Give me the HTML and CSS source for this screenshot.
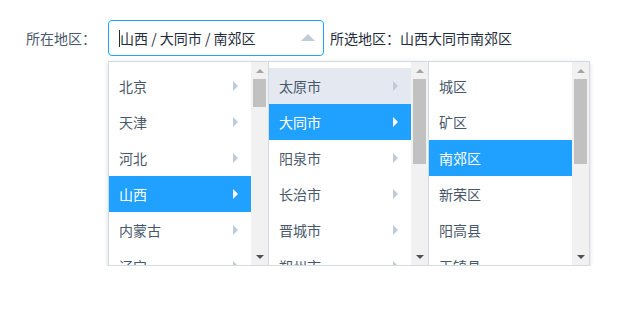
FILE: index.html
```html
<!DOCTYPE html>
<html lang="zh-CN">
<head>
<meta charset="utf-8">
<title>级联选择</title>
<link rel="stylesheet" href="styles.css">
</head>
<body>
<div class="page">
  <div class="form-row">
    <label class="form-label">所在地区：</label>
    <div class="cascader-input">
      <span class="caret-line"></span>
      <span class="cascader-value">山西 / 大同市 / 南郊区</span>
      <span class="cascader-arrow"></span>
    </div>
    <span class="selected-text">所选地区：山西大同市南郊区</span>
  </div>
  <div class="cascader-menus">
    <div class="menu">
      <ul class="menu-list">
        <li class="item">北京<i class="caret"></i></li>
        <li class="item">天津<i class="caret"></i></li>
        <li class="item">河北<i class="caret"></i></li>
        <li class="item active">山西<i class="caret"></i></li>
        <li class="item">内蒙古<i class="caret"></i></li>
        <li class="item">辽宁<i class="caret"></i></li>
      </ul>
      <div class="scrollbar">
        <div class="sb-btn"><span class="sb-up"></span></div>
        <div class="sb-track"><div class="sb-thumb thumb-short"></div></div>
        <div class="sb-btn"><span class="sb-down"></span></div>
      </div>
    </div>
    <div class="menu">
      <ul class="menu-list">
        <li class="item hover">太原市<i class="caret"></i></li>
        <li class="item active">大同市<i class="caret"></i></li>
        <li class="item">阳泉市<i class="caret"></i></li>
        <li class="item">长治市<i class="caret"></i></li>
        <li class="item">晋城市<i class="caret"></i></li>
        <li class="item">朔州市<i class="caret"></i></li>
      </ul>
      <div class="scrollbar">
        <div class="sb-btn"><span class="sb-up"></span></div>
        <div class="sb-track"><div class="sb-thumb thumb-long"></div></div>
        <div class="sb-btn"><span class="sb-down"></span></div>
      </div>
    </div>
    <div class="menu menu-last">
      <ul class="menu-list">
        <li class="item">城区</li>
        <li class="item">矿区</li>
        <li class="item active">南郊区</li>
        <li class="item">新荣区</li>
        <li class="item">阳高县</li>
        <li class="item">天镇县</li>
      </ul>
      <div class="scrollbar">
        <div class="sb-btn"><span class="sb-up"></span></div>
        <div class="sb-track"><div class="sb-thumb thumb-long"></div></div>
        <div class="sb-btn"><span class="sb-down"></span></div>
      </div>
    </div>
  </div>
</div>
</body>
</html>
```
FILE: styles.css
```css
* { box-sizing: border-box; }
html, body { margin: 0; padding: 0; background: #fff; }
body {
  font-family: "Noto Sans CJK SC", "Microsoft YaHei", "Noto Sans", sans-serif;
  font-size: 14px;
  color: #48576a;
}
.page {
  padding: 20px 0 0 8px;
}
.form-row {
  display: flex;
  align-items: center;
}
.form-label {
  width: 100px;
  text-align: right;
  padding-right: 12px;
  color: #48576a;
  line-height: 36px;
}
.cascader-input {
  width: 216px;
  height: 36px;
  border: 1px solid #20a0ff;
  border-radius: 4px;
  display: flex;
  align-items: center;
  padding-left: 10px;
  position: relative;
}
.caret-line {
  width: 1px;
  height: 17px;
  background: #1f2d3d;
}
.cascader-value {
  color: #1f2d3d;
  line-height: 36px;
}
.cascader-arrow {
  position: absolute;
  right: 8px;
  top: 13px;
  width: 0;
  height: 0;
  border-left: 7px solid transparent;
  border-right: 7px solid transparent;
  border-bottom: 7px solid #bfcbd9;
}
.selected-text {
  margin-left: 6px;
  color: #1f2d3d;
  line-height: 36px;
}
.cascader-menus {
  margin: 5px 0 0 100px;
  display: flex;
  width: 482px;
  height: 205px;
  background: #fff;
  border: 1px solid #d1dbe5;
  box-shadow: 0 2px 4px rgba(0,0,0,.12), 0 0 6px rgba(0,0,0,.04);
}
.menu {
  width: 160px;
  flex: none;
  display: flex;
  border-right: 1px solid #d1dbe5;
  overflow: hidden;
}
.menu-last { border-right: none; }
.menu-list {
  list-style: none;
  margin: 0;
  padding: 6px 0 0;
  flex: 1;
  overflow: hidden;
}
.item {
  height: 36px;
  line-height: 36px;
  padding: 0 13px 0 10px;
  display: flex;
  align-items: center;
  justify-content: space-between;
  color: #48576a;
  white-space: nowrap;
}
.item.hover { background: #e4e8f1; }
.item.active { background: #20a0ff; color: #fff; }
.caret {
  width: 0;
  height: 0;
  border-top: 5px solid transparent;
  border-bottom: 5px solid transparent;
  border-left: 5px solid #bfcbd9;
}
.item.active .caret { border-left-color: #fff; }
.scrollbar {
  width: 17px;
  flex: none;
  background: #f1f1f1;
  display: flex;
  flex-direction: column;
}
.sb-btn {
  height: 17px;
  display: flex;
  align-items: center;
  justify-content: center;
  flex: none;
}
.sb-up {
  width: 0; height: 0;
  border-left: 4px solid transparent;
  border-right: 4px solid transparent;
  border-bottom: 4px solid #a3a3a3;
}
.sb-down {
  width: 0; height: 0;
  border-left: 4px solid transparent;
  border-right: 4px solid transparent;
  border-top: 4px solid #505050;
}
.sb-track { flex: 1; padding: 0 2px; }
.sb-thumb { background: #c1c1c1; }
.thumb-short { height: 28px; }
.thumb-long { height: 85px; }
```
